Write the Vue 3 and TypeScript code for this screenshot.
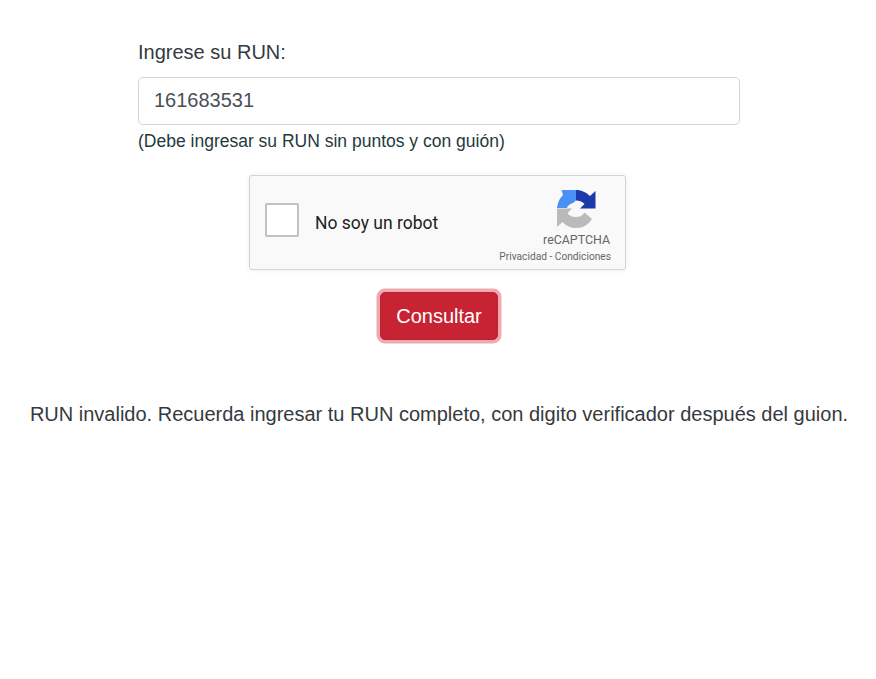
<template>
  <main class="page">
    <form class="run-form" @submit.prevent>
      <label class="run-label" for="run">Ingrese su RUN:</label>
      <input id="run" v-model="run" class="run-input" type="text" />
      <small class="run-hint">(Debe ingresar su RUN sin puntos y con guión)</small>

      <div class="captcha">
        <span class="captcha-box"></span>
        <span class="captcha-text">No soy un robot</span>
        <div class="captcha-brand">
          <svg class="captcha-logo" viewBox="0 0 48 48" width="48" height="48">
            <path fill="#4a90f5" d="M5 23 C5.500 17.500 7.500 13.500 11 10 L9.500 5 L24 5 L24 15.500 L21 18 C18 19 15.500 20.500 15 23 Z" />
            <path fill="#1c3aa9" d="M24 5 C30 5 34 7.500 38 11 L43.500 6 L43.500 23.500 L28 23.500 L32.500 19 C30.500 17 28 15.500 24 15.500 Z" />
            <path fill="#bababa" d="M5 23.500 L20 23.500 L15.500 28 C17 30.500 20 32 24 32 C28 32 30.500 30.500 32.500 27.500 L40 34 C36 40 31 43 24 43 C19 43 14 41 10.500 37 L5 42 Z" />
          </svg>
          <span class="captcha-name">reCAPTCHA</span>
          <span class="captcha-links">Privacidad - Condiciones</span>
        </div>
      </div>

      <button class="submit" type="submit">Consultar</button>
    </form>

    <p class="message">RUN invalido. Recuerda ingresar tu RUN completo, con digito verificador después del guion.</p>
  </main>
</template>

<script setup lang="ts">
import { ref } from 'vue';

const run = ref('161683531');
</script>

<style>
body {
  background: #fff;
}
</style>

<style scoped>
.page {
  font-family: "Liberation Sans", Arial, sans-serif;
  color: #343a40;
  padding-top: 40px;
}
.run-form {
  width: 602px;
  margin: 0 auto;
  transform: translateX(1px);
  display: flex;
  flex-direction: column;
}
.run-label {
  font-size: 20px;
  line-height: 24px;
  margin-bottom: 13px;
}
.run-input {
  box-sizing: border-box;
  width: 100%;
  height: 48px;
  padding: 0 15px 2px;
  font: 20px "Liberation Sans", Arial, sans-serif;
  color: #495057;
  background: #fff;
  border: 1px solid #ced4da;
  border-radius: 5px;
  outline: none;
}
.run-hint {
  font-size: 17.5px;
  line-height: 21px;
  margin-top: 6px;
  color: #1f3a3d;
}
.captcha {
  box-sizing: border-box;
  align-self: center;
  width: 377px;
  height: 95px;
  margin-top: 23px;
  margin-left: -3px;
  display: flex;
  align-items: center;
  padding-left: 15px;
  background: #f9f9f9;
  border: 1px solid #d3d3d3;
  border-radius: 3px;
  box-shadow: 0 0 5px rgba(0, 0, 0, 0.08);
  font-family: Roboto, "Liberation Sans", sans-serif;
}
.captcha-box {
  box-sizing: border-box;
  flex: none;
  align-self: flex-start;
  width: 34px;
  height: 34px;
  margin-top: 27px;
  background: #fff;
  border: 2px solid #c1c1c1;
  border-radius: 2px;
}
.captcha-text {
  margin-left: 16px;
  font-size: 17.5px;
  color: #222;
}
.captcha-brand {
  margin-left: auto;
  margin-right: 14px;
  align-self: flex-start;
  padding-top: 9px;
  display: flex;
  flex-direction: column;
  align-items: flex-end;
  color: #666;
}
.captcha-logo {
  margin-right: 11px;
}
.captcha-name {
  font-size: 12.4px;
  line-height: 14px;
  margin-right: 1px;
}
.captcha-links {
  font-size: 10.2px;
  line-height: 12px;
  margin-top: 4px;
  white-space: nowrap;
}
.submit {
  box-sizing: border-box;
  align-self: center;
  width: 118px;
  height: 48px;
  margin-top: 22px;
  font: 20px "Liberation Sans", Arial, sans-serif;
  color: #fff;
  background: #c82333;
  border: 1px solid #bd2130;
  border-radius: 5px;
  box-shadow: 0 0 0 3.5px rgba(225, 83, 97, 0.5);
}
.message {
  margin: 62px 0 0;
  text-align: center;
  font-size: 20px;
  line-height: 24px;
  padding-left: 2px;
}
</style>
